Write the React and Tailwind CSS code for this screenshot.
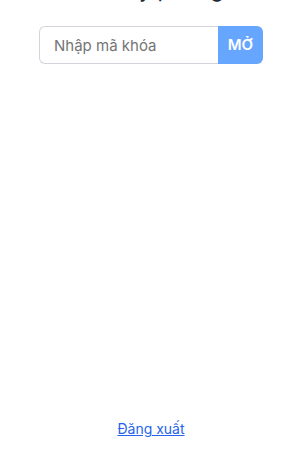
import React from "react";

export default function App() {
  return (
    <div className="w-[293px] h-[453px] bg-white overflow-hidden flex flex-col" style={{ fontFamily: "Inter, 'Noto Sans', sans-serif" }}>
      <h1 className="mt-[-24px] h-[26px] text-[22px] leading-[26px] text-center text-[#1f2937] pl-[3px] shrink-0">Quản lý phòng</h1>
      <div className="ml-[39px] w-[224px] h-[38px] flex mt-[24px] shrink-0">
        <input
          placeholder="Nhập mã khóa"
          className="flex-1 min-w-0 h-full border border-[#d1d5db] border-r-0 rounded-l-[6px] pl-[14px] pr-[12px] text-[15px] text-[#374151] placeholder:text-[#757575] outline-none"
        />
        <button className="w-[45px] h-full bg-[#66a6ff] text-white text-[15px] font-semibold rounded-r-[6px]">MỞ</button>
      </div>
      <div className="flex-1" />
      <div className="text-center mb-[13px] ml-[9px]">
        <a href="#" className="text-[14px] text-[#2563eb] underline">Đăng xuất</a>
      </div>
    </div>
  );
}
